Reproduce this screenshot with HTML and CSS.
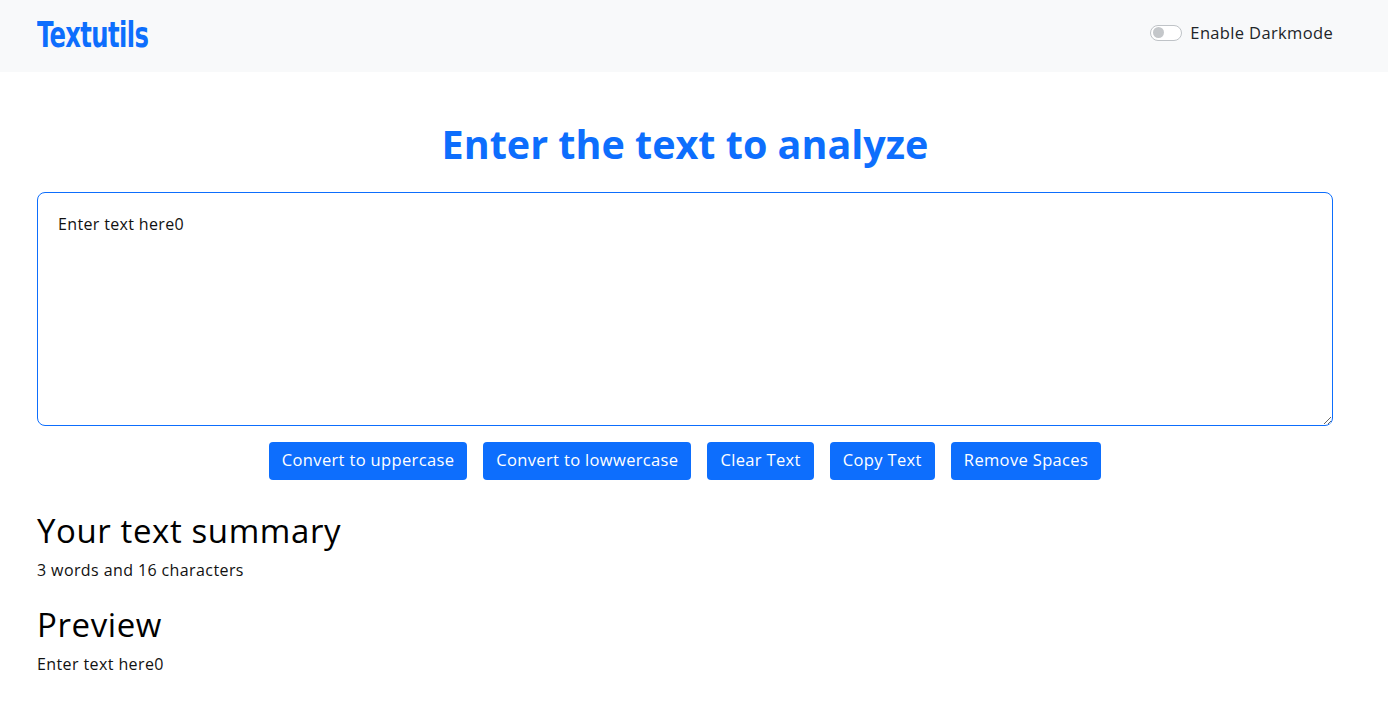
FILE: index.html
```html
<!DOCTYPE html>
<html lang="en">
<head>
<meta charset="utf-8">
<title>Textutils</title>
<link rel="stylesheet" href="styles.css">
</head>
<body>
<nav class="navbar">
  <a class="brand" href="#">Textutils</a>
  <div class="mode-switch">
    <span class="track"><span class="knob"></span></span>
    <label class="mode-label">Enable Darkmode</label>
  </div>
</nav>
<main class="container">
  <h1 class="title">Enter the text to analyze</h1>
  <textarea class="text-box" rows="8">Enter text here0</textarea>
  <div class="actions">
    <button class="btn">Convert to uppercase</button>
    <button class="btn">Convert to lowwercase</button>
    <button class="btn">Clear Text</button>
    <button class="btn">Copy Text</button>
    <button class="btn">Remove Spaces</button>
  </div>
  <h2 class="section-title">Your text summary</h2>
  <p class="info">3 words and 16 characters</p>
  <h2 class="section-title preview-title">Preview</h2>
  <p class="info">Enter text here0</p>
</main>
</body>
</html>
```

FILE: styles.css
```css
* { box-sizing: border-box; }
html, body { margin: 0; padding: 0; }
body {
  background: #fff;
  color: #111;
  font-family: "Open Sans", "DejaVu Sans", sans-serif;
  font-size: 16px;
}
.navbar {
  height: 72px;
  background: #f8f9fa;
  display: flex;
  align-items: center;
  justify-content: space-between;
  padding: 0 55px 0 37px;
}
.brand {
  color: #0d6efd;
  text-decoration: none;
  font-family: "Liberation Sans Narrow", "DejaVu Sans Condensed", "Liberation Sans", sans-serif;
  font-weight: 700;
  font-size: 27px;
  letter-spacing: -0.6px;
  transform: scaleY(1.32);
  transform-origin: left center;
  display: inline-block;
  margin-top: -4px;
}
.mode-switch {
  display: flex;
  align-items: center;
  gap: 8px;
  margin-top: -7px;
}
.track {
  width: 32px;
  height: 16px;
  border: 1px solid #bfc3c7;
  border-radius: 8px;
  background: #fff;
  display: flex;
  align-items: center;
  padding-left: 2px;
}
.knob {
  width: 11px;
  height: 11px;
  border-radius: 50%;
  background: #c4c7ca;
}
.mode-label {
  font-size: 16.5px;
  letter-spacing: 0.35px;
  color: #212529;
}
.container {
  padding: 48px 55px 0 37px;
}
.title {
  margin: 0 0 24px;
  text-align: center;
  color: #0d6efd;
  font-size: 39.5px;
  line-height: 48px;
  font-weight: 700;
}
.text-box {
  display: block;
  width: 100%;
  height: 234px;
  border: 1px solid #0d6efd;
  border-radius: 8px;
  padding: 19px 20px;
  font-family: inherit;
  font-size: 16px;
  letter-spacing: 0.35px;
  line-height: 24px;
  color: #111;
  resize: both;
  outline: none;
}
.actions {
  display: flex;
  justify-content: center;
  gap: 16px;
  margin-top: 16px;
}
.btn {
  height: 38px;
  padding: 0 13px 3px;
  background: #0d6efd;
  color: #fff;
  border: none;
  border-radius: 4px;
  font-family: inherit;
  font-size: 16.5px;
  letter-spacing: 0.35px;
}
.section-title {
  margin: 32px 0 8px;
  font-size: 33px;
  letter-spacing: 0.6px;
  line-height: 38px;
  font-weight: 500;
  color: #000;
}
.preview-title {
  margin-top: 24px;
}
.info {
  margin: 0 0 16px;
  font-size: 16px;
  letter-spacing: 0.4px;
  line-height: 24px;
}
```
